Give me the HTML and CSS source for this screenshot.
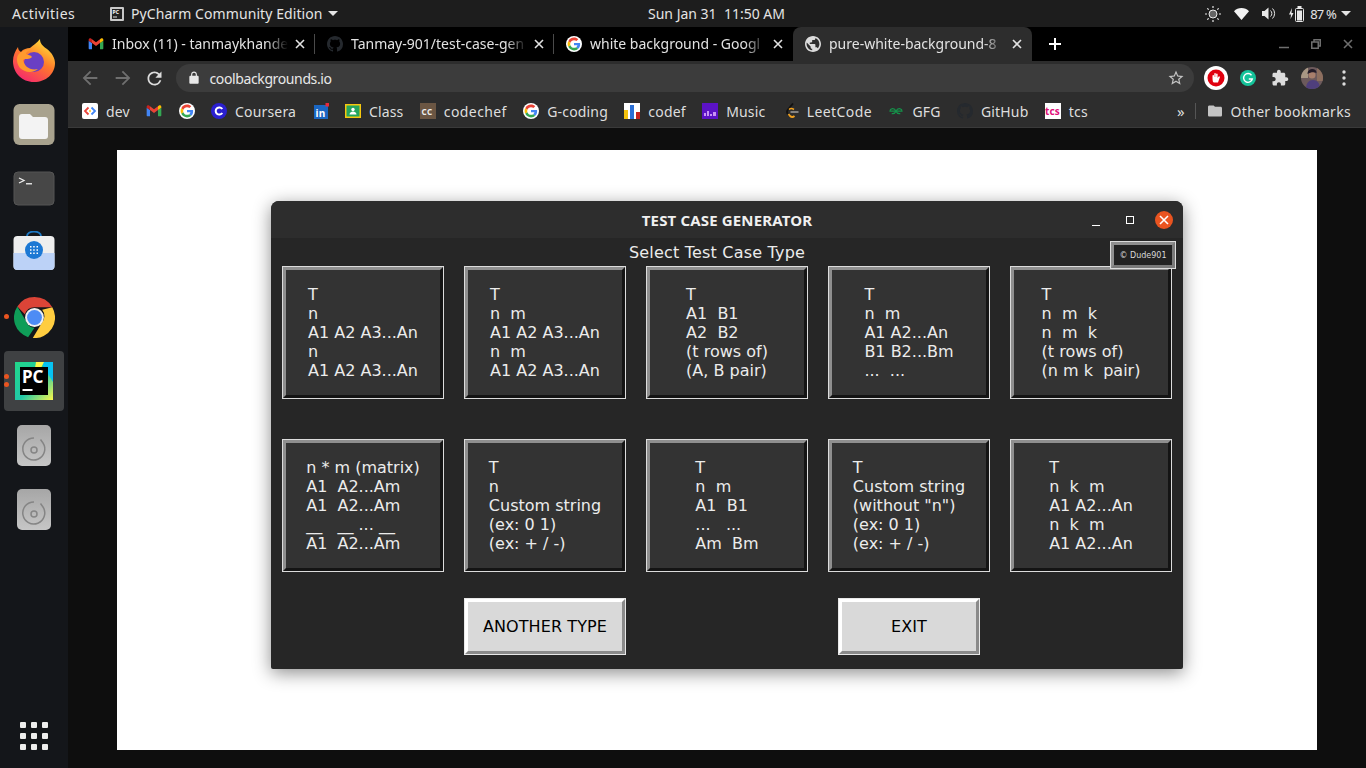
FILE: index.html
```html
<!DOCTYPE html>
<html>

<head>
    <title>Test Case Generator</title>
    <link rel="stylesheet" href="styles.css">
</head>

<body>
    <svg class="defs" width="0" height="0">
        <defs>
            <linearGradient id="discg" x1="0" y1="0" x2="0" y2="1">
                <stop offset="0" stop-color="#a6a6a6" />
                <stop offset="1" stop-color="#c6c6c6" />
            </linearGradient>
        </defs>
        <symbol id="i-google" viewBox="-6 -6 60 60">
            <circle cx="24" cy="24" r="30" fill="#fff" />
            <path fill="#EA4335" d="M24 9.5c3.54 0 6.71 1.22 9.21 3.6l6.85-6.85C35.9 2.38 30.47 0 24 0 14.62 0 6.51 5.38 2.56 13.22l7.98 6.19C12.43 13.72 17.74 9.5 24 9.5z" />
            <path fill="#4285F4" d="M46.98 24.55c0-1.57-.15-3.09-.38-4.55H24v9.02h12.94c-.58 2.96-2.26 5.48-4.78 7.18l7.73 6c4.51-4.18 7.09-10.36 7.09-17.65z" />
            <path fill="#FBBC05" d="M10.53 28.59c-.48-1.45-.76-2.99-.76-4.59s.27-3.14.76-4.59l-7.98-6.19C.92 16.46 0 20.12 0 24c0 3.88.92 7.54 2.56 10.78l7.97-6.19z" />
            <path fill="#34A853" d="M24 48c6.48 0 11.93-2.13 15.89-5.81l-7.73-6c-2.15 1.45-4.92 2.3-8.16 2.3-6.26 0-11.57-4.22-13.47-9.91l-7.98 6.19C6.51 42.62 14.62 48 24 48z" />
        </symbol>
        <symbol id="i-gmail" viewBox="0 0 24 24">
            <path fill="#4285f4" d="M2 20h4v-9.5L1 7v11.5A1.5 1.5 0 002 20z" />
            <path fill="#34a853" d="M18 20h4a1.5 1.5 0 001-1.5V7l-5 3.5z" />
            <path fill="#fbbc04" d="M18 5v5.5L23 7V5.5C23 3.6 20.8 2.6 19.4 3.7z" />
            <path fill="#ea4335" d="M6 10.5V5l6 4.5L18 5v5.5l-6 4.5z" />
            <path fill="#c5221f" d="M1 5.5V7l5 3.5V5L4.6 3.7C3.2 2.6 1 3.6 1 5.5z" />
        </symbol>
        <symbol id="i-github" viewBox="0 0 16 16">
            <path d="M8 0C3.58 0 0 3.58 0 8c0 3.54 2.29 6.53 5.47 7.59.4.07.55-.17.55-.38 0-.19-.01-.82-.01-1.49-2.01.37-2.53-.49-2.69-.94-.09-.23-.48-.94-.82-1.13-.28-.15-.68-.52-.01-.53.63-.01 1.08.58 1.23.82.72 1.21 1.87.87 2.33.66.07-.52.28-.87.51-1.07-1.78-.2-3.64-.89-3.64-3.95 0-.87.31-1.59.82-2.15-.08-.2-.36-1.02.08-2.12 0 0 .67-.21 2.2.82.64-.18 1.32-.27 2-.27.68 0 1.36.09 2 .27 1.53-1.04 2.2-.82 2.2-.82.44 1.1.16 1.92.08 2.12.51.56.82 1.27.82 2.15 0 3.07-1.87 3.75-3.65 3.95.29.25.54.73.54 1.48 0 1.07-.01 1.93-.01 2.2 0 .21.15.46.55.38A8.013 8.013 0 0016 8c0-4.42-3.58-8-8-8z" />
        </symbol>
        <symbol id="i-close" viewBox="0 0 10 10">
            <path d="M1 1l8 8M9 1l-8 8" stroke="currentColor" stroke-width="1.6" fill="none" />
        </symbol>
        <symbol id="i-disc" viewBox="0 0 40 41">
            <rect x="3" y="0" width="34" height="41" rx="5" fill="url(#discg)" />
            <path d="M20 13a11 11 0 1 0 9 5l-2.5-3.5" fill="none" stroke="#858585" stroke-width="1.5" />
            <circle cx="20" cy="25" r="3" fill="none" stroke="#858585" stroke-width="1.5" />
        </symbol>
    </svg>

    <header class="topbar">
        <span class="activities">Activities</span>
        <span class="app-menu">
            <svg width="14" height="14" viewBox="0 0 14 14">
                <rect width="14" height="14" rx="1" fill="#c9c9c9" />
                <rect x="2" y="2" width="10" height="10" fill="#222" />
                <rect x="3" y="9.5" width="4" height="1" fill="#ddd" />
                <text x="2.6" y="7" class="pc-mini">PC</text>
            </svg>
            <span class="app-name">PyCharm Community Edition</span>
            <i class="caret"></i>
        </span>
        <span class="clock">Sun Jan 31&nbsp;&nbsp;11:50 AM</span>
        <span class="tray">
            <svg class="tray-ico" width="16" height="16" viewBox="0 0 16 16" fill="none" stroke="#e8e8e8">
                <circle cx="8" cy="8" r="4" fill="#e8e8e8" fill-opacity=".35" />
                <path d="M8 0v2M8 14v2M0 8h2M14 8h2M2.3 2.3l1.4 1.4M12.3 12.3l1.4 1.4M2.3 13.7l1.4-1.4M12.3 3.7l1.4-1.4" stroke-width="1.2" />
            </svg>
            <svg class="tray-ico" width="15" height="12" viewBox="0 0 15 12">
                <path d="M0 3.2C2 1.2 4.6 0 7.5 0S13 1.2 15 3.2L7.5 12z" fill="#f2f2f2" />
            </svg>
            <svg class="tray-ico" width="14" height="13" viewBox="0 0 14 13">
                <path d="M0 4h2.5L6.5.5v12L2.5 9H0z" fill="#e8e8e8" />
                <path d="M8.5 3.5a4 4 0 0 1 0 6M10.5 1.5a7 7 0 0 1 0 10" fill="none" stroke="#e8e8e8" />
            </svg>
            <svg class="tray-bat" width="15" height="16" viewBox="0 0 15 16">
                <path d="M3 2L0 8.5h2L1.5 13 4.5 7h-2z" fill="#e8e8e8" />
                <rect x="6.5" y="2.5" width="8" height="13" rx="1" fill="none" stroke="#e8e8e8" />
                <rect x="8.5" y="0" width="4" height="2" fill="#e8e8e8" />
                <rect x="8" y="4.5" width="5" height="10" fill="#e8e8e8" />
            </svg>
            <span class="tray-pct">87 %</span>
            <i class="caret"></i>
        </span>
    </header>

    <div class="desk">
        <nav class="dock">
            <span class="dock-item">
                <svg width="44" height="44" viewBox="0 0 44 44">
                    <defs>
                        <linearGradient id="ffa" x1="0.8" y1="0.05" x2="0.25" y2="1">
                            <stop offset="0" stop-color="#ffe03a" />
                            <stop offset=".45" stop-color="#ff7a2a" />
                            <stop offset="1" stop-color="#f5276f" />
                        </linearGradient>
                    </defs>
                    <path d="M28 0c0 5 3 7 7 10 5 4 8 9 8 14 0 11-9 19-21 19S1 34 1 22c0-5 2-10 5-14 0 2 1 4 3 5 2-3 6-4 9-4 3-3 7-5 10-9z" fill="url(#ffa)" />
                    <circle cx="22" cy="23" r="10" fill="#6a3fc4" />
                    <path d="M6 16c3-4 8-6 12-5-3 1-4 3-4 4 2 1 5 1 6 3-3 3-6 1-9 3 1 6 7 11 15 9-6 5-14 3-18-1C5 25 4 20 6 16z" fill="#ff9a2e" />
                </svg>
            </span>
            <span class="dock-item">
                <svg width="42" height="42" viewBox="0 0 42 42">
                    <rect width="41" height="41" x="0.5" rx="6" fill="#a8a28e" />
                    <path d="M6 13a3 3 0 0 1 3-3h8l3 3h12a3 3 0 0 1 3 3v16a3 3 0 0 1-3 3H9a3 3 0 0 1-3-3z" fill="#f3f3f3" />
                </svg>
            </span>
            <span class="dock-item">
                <svg width="42" height="36" viewBox="0 0 42 36">
                    <rect x="1" y="1" width="40" height="33" rx="4" fill="#474747" stroke="#555" />
                    <path d="M6 7l5 2.5-5 2.5" fill="none" stroke="#eee" stroke-width="1.3" />
                    <rect x="13" y="12" width="6" height="1.5" fill="#ddd" />
                </svg>
            </span>
            <span class="dock-item">
                <svg width="42" height="44" viewBox="0 -5 42 44">
                    <path d="M14 2V0a7 4.5 0 0 1 14 0v2" fill="none" stroke="#1c78c4" stroke-width="1.8" />
                    <rect x="0.5" y="0" width="41" height="34" rx="4" fill="#eeeeee" />
                    <path d="M.5 17h41v13a4 4 0 0 1-4 4h-33a4 4 0 0 1-4-4z" fill="#bcd2f7" />
                    <circle cx="21" cy="14" r="9" fill="#1c78d4" />
                    <path d="M17 10h1.5v1.5H17zM20.2 10h1.5v1.500h-1.500zM23.5 10H25v1.5h-1.5zM17 13.3h1.5v1.5H17zM20.2 13.3h1.5v1.5h-1.5zM23.5 13.3H25v1.5h-1.5zM17 16.5h1.5V18H17zM20.2 16.5h1.5V18h-1.5zM23.5 16.5H25V18h-1.5z" fill="#fff" />
                </svg>
            </span>
            <span class="dock-item">
                <svg width="41" height="41" viewBox="0 0 48 48">
                    <path d="M24 0a24 24 0 0 1 20.8 12H24a12 12 0 0 0-11.4 8.3L3.9 11A24 24 0 0 1 24 0z" fill="#db4437" />
                    <path d="M3.9 11L14 28a12 12 0 0 0 10 8l-7.5 11A24 24 0 0 1 3.9 11z" fill="#0f9d58" />
                    <path d="M44.8 12A24 24 0 0 1 22 48l10.5-17.5A12 12 0 0 0 33 15z" fill="#ffcd40" />
                    <circle cx="24" cy="24" r="11" fill="#f1f1f1" />
                    <circle cx="24" cy="24" r="8.7" fill="#4d8cf5" />
                </svg>
            </span>
            <span class="dock-item dock-item-on">
                <svg width="40" height="40" viewBox="0 0 40 40">
                    <defs>
                        <linearGradient id="pcg" x1="0" y1="0" x2="1" y2="1">
                            <stop offset="0" stop-color="#21d789" />
                            <stop offset=".55" stop-color="#21c8a8" />
                            <stop offset="1" stop-color="#fcf84a" />
                        </linearGradient>
                    </defs>
                    <rect x="1" y="1" width="38" height="38" fill="url(#pcg)" />
                    <path d="M27 1h12v20L31 8z" fill="#07c3f2" />
                    <path d="M22 1h8l-3 6h-6z" fill="#fcf84a" />
                    <rect x="6" y="6" width="28" height="28" fill="#000" />
                    <text x="8" y="22" class="pc-big">PC</text>
                    <rect x="8.5" y="28" width="10" height="2" fill="#fff" />
                </svg>
            </span>
            <span class="dock-item"><svg width="40" height="41"><use href="#i-disc" /></svg></span>
            <span class="dock-item"><svg width="40" height="41"><use href="#i-disc" /></svg></span>
            <span class="dock-grid">
                <i></i><i></i><i></i><i></i><i></i><i></i><i></i><i></i><i></i>
            </span>
            <i class="run-dot run-chrome"></i>
            <i class="run-dot run-pc1"></i>
            <i class="run-dot run-pc2"></i>
        </nav>

        <div class="browser">
            <div class="tabstrip">
                <div class="tab">
                    <svg class="fav" width="16" height="16"><use href="#i-gmail" /></svg>
                    <span class="tab-title">Inbox (11) - tanmaykhande</span>
                    <svg class="tab-x" width="10" height="10"><use href="#i-close" /></svg>
                </div>
                <div class="tab">
                    <svg class="fav fav-gh" width="16" height="16"><use href="#i-github" /></svg>
                    <span class="tab-title">Tanmay-901/test-case-gen</span>
                    <svg class="tab-x" width="10" height="10"><use href="#i-close" /></svg>
                </div>
                <div class="tab tab-last">
                    <svg class="fav" width="16" height="16"><use href="#i-google" /></svg>
                    <span class="tab-title">white background - Googl</span>
                    <svg class="tab-x" width="10" height="10"><use href="#i-close" /></svg>
                </div>
                <div class="tab tab-on">
                    <svg class="fav" width="16" height="16" viewBox="2 2 20 20">
                        <path fill="#dcdcdc" d="M12 2C6.48 2 2 6.48 2 12s4.48 10 10 10 10-4.48 10-10S17.52 2 12 2zm-1 17.93c-3.95-.49-7-3.85-7-7.93 0-.62.08-1.21.21-1.79L9 15v1c0 1.1.9 2 2 2v1.93zm6.9-2.54c-.26-.81-1-1.39-1.9-1.39h-1v-3c0-.55-.45-1-1-1H8v-2h2c.55 0 1-.45 1-1V7h2c1.1 0 2-.9 2-2v-.41c2.93 1.19 5 4.06 5 7.41 0 2.08-.8 3.97-2.1 5.39z" />
                    </svg>
                    <span class="tab-title">pure-white-background-8</span>
                    <svg class="tab-x" width="10" height="10"><use href="#i-close" /></svg>
                </div>
                <svg class="newtab" width="12" height="12" viewBox="0 0 12 12">
                    <path d="M6 0v12M0 6h12" stroke="#fff" stroke-width="2" />
                </svg>
                <div class="winctl">
                    <svg width="10" height="10" viewBox="0 0 10 10"><path d="M0 8.5h10" stroke="#6e6e6e" stroke-width="1.5" /></svg>
                    <svg width="10" height="10" viewBox="0 0 10 10" fill="none" stroke="#6e6e6e" stroke-width="1.5"><path d="M.75 3h6.5v6.25H.75zM3 2.5V.75h6.25V7H7.5" /></svg>
                    <svg width="10" height="10" viewBox="0 0 10 10" color="#6e6e6e"><use href="#i-close" /></svg>
                </div>
            </div>

            <div class="toolbar">
                <svg class="nav-ico" width="22" height="22" viewBox="0 0 24 24" fill="#6f6f6f"><path d="M20 11H7.83l5.59-5.59L12 4l-8 8 8 8 1.41-1.41L7.83 13H20v-2z" /></svg>
                <svg class="nav-ico" width="22" height="22" viewBox="0 0 24 24" fill="#6f6f6f"><path d="M4 13h12.17l-5.59 5.59L12 20l8-8-8-8-1.41 1.41L16.17 11H4v2z" /></svg>
                <svg class="nav-ico" width="21" height="21" viewBox="0 0 24 24" fill="#dcdcdc"><path d="M17.65 6.35A7.958 7.958 0 0012 4c-4.42 0-7.99 3.58-7.99 8s3.57 8 7.99 8c3.73 0 6.84-2.55 7.73-6h-2.08A5.99 5.99 0 0112 18c-3.31 0-6-2.69-6-6s2.69-6 6-6c1.66 0 3.14.69 4.22 1.78L13 11h7V4l-2.35 2.35z" /></svg>
                <div class="omnibox">
                    <svg width="14" height="14" viewBox="0 0 24 24" fill="#e8e8e8"><path d="M18 8h-1V6c0-2.76-2.24-5-5-5S7 3.24 7 6v2H6c-1.1 0-2 .9-2 2v10c0 1.1.9 2 2 2h12c1.1 0 2-.9 2-2V10c0-1.1-.9-2-2-2zM9 8V6c0-1.66 1.34-3 3-3s3 1.34 3 3v2H9z" /></svg>
                    <span class="url">coolbackgrounds.io</span>
                    <svg class="star" width="18" height="18" viewBox="0 0 24 24" fill="#c4c4c4"><path d="M22 9.24l-7.19-.62L12 2 9.19 8.63 2 9.24l5.46 4.73L5.82 21 12 17.27 18.18 21l-1.63-7.03L22 9.24zM12 15.4l-3.76 2.27 1-4.28-3.32-2.88 4.38-.38L12 6.1l1.71 4.04 4.38.38-3.32 2.88 1 4.28L12 15.4z" /></svg>
                </div>
                <div class="ext">
                    <svg width="24" height="24" viewBox="0 0 24 24">
                        <circle cx="12" cy="12" r="12" fill="#fff" />
                        <circle cx="12" cy="12" r="8.5" fill="#e0000f" />
                        <path d="M8.5 12V9.5a.8.8 0 0 1 1.5 0V11h.3V7.5a.8.8 0 0 1 1.5 0V11h.3V8a.8.8 0 0 1 1.5 0v4l1-1.5a.8.8 0 0 1 1.3.8L14 16.5h-4c-1 0-1.5-1.5-1.5-4.5z" fill="#fff" />
                    </svg>
                    <svg width="16" height="16" viewBox="0 0 16 16">
                        <circle cx="8" cy="8" r="8" fill="#15c39a" />
                        <path d="M11.5 5.2A4.4 4.4 0 1 0 12.3 9H8.8" fill="none" stroke="#fff" stroke-width="1.4" />
                    </svg>
                    <svg class="ext-puzzle" width="18" height="18" viewBox="0 0 24 24" fill="#dcdcdc"><path d="M20.5 11H19V7c0-1.1-.9-2-2-2h-4V3.5C13 2.12 11.88 1 10.5 1S8 2.12 8 3.5V5H4c-1.1 0-1.99.9-1.99 2v3.8H3.5c1.49 0 2.7 1.21 2.7 2.7s-1.21 2.7-2.7 2.7H2V20c0 1.1.9 2 2 2h3.8v-1.5c0-1.49 1.21-2.7 2.7-2.7 1.49 0 2.7 1.21 2.7 2.7V22H17c1.1 0 2-.9 2-2v-4h1.5c1.38 0 2.5-1.12 2.5-2.5S21.88 11 20.5 11z" /></svg>
                    <svg width="22" height="22" viewBox="0 0 22 22">
                        <defs><clipPath id="av"><circle cx="11" cy="11" r="11" /></clipPath></defs>
                        <g clip-path="url(#av)">
                            <rect width="22" height="22" fill="#6c5a5c" />
                            <rect width="7" height="11" fill="#a89784" />
                            <rect x="16" width="6" height="14" fill="#8d6f5f" />
                            <path d="M5 22c0-6 3-9 7-9s7 3 7 9z" fill="#4f3f7c" />
                            <circle cx="11" cy="8" r="3.5" fill="#a87f6c" />
                            <path d="M6.5 7c0-4 3-5 5-5s4 1 4 4c-2-1-6-1-9 1z" fill="#241c28" />
                        </g>
                    </svg>
                    <svg class="ext-dots" width="4" height="16" viewBox="0 0 4 16" fill="#dcdcdc"><circle cx="2" cy="2" r="1.7" /><circle cx="2" cy="8" r="1.7" /><circle cx="2" cy="14" r="1.7" /></svg>
                </div>
            </div>

            <div class="bookmarks">
                <span class="bm">
                    <svg width="16" height="16" viewBox="0 0 16 16">
                        <rect width="16" height="16" rx="2" fill="#fff" />
                        <path d="M6.5 4.5L3 8l3.5 3.5" fill="none" stroke="#e8453c" stroke-width="1.8" />
                        <path d="M9.5 4.5L13 8l-3.5 3.5" fill="none" stroke="#4285f4" stroke-width="1.8" />
                        <path d="M7 8l1-1.5L9 8l-1 1.5z" fill="#fbbc04" />
                    </svg>dev
                </span>
                <span class="bm"><svg width="16" height="16"><use href="#i-gmail" /></svg></span>
                <span class="bm"><svg width="16" height="16"><use href="#i-google" /></svg></span>
                <span class="bm">
                    <svg width="16" height="16" viewBox="0 0 16 16">
                        <circle cx="8" cy="8" r="8" fill="#2a1fd0" />
                        <path d="M11.3 6a3.6 3.6 0 1 0 0 4" fill="none" stroke="#fff" stroke-width="2" />
                    </svg>Coursera
                </span>
                <span class="bm">
                    <svg width="16" height="16" viewBox="0 0 16 16">
                        <rect x="1" y="2" width="14" height="14" fill="#1a66c2" />
                        <rect x="12.5" y="0" width="3.5" height="3.5" fill="#e8283a" />
                        <text x="2.5" y="13.5" class="li-mini">in</text>
                    </svg>
                </span>
                <span class="bm">
                    <svg width="16" height="16" viewBox="0 0 16 16">
                        <rect y="1" width="16" height="14" fill="#f7c80f" />
                        <rect x="1.5" y="2.5" width="13" height="11" fill="#25a55f" />
                        <circle cx="8" cy="6.5" r="1.7" fill="#fff" />
                        <path d="M4.5 11.5c0-2 2-3 3.5-3s3.5 1 3.5 3z" fill="#fff" />
                    </svg>Class
                </span>
                <span class="bm bm-wide">
                    <svg width="16" height="16" viewBox="0 0 16 16">
                        <rect width="16" height="16" fill="#6b5643" />
                        <text x="1.5" y="11.5" class="cc-mini">CC</text>
                    </svg>codechef
                </span>
                <span class="bm"><svg width="16" height="16"><use href="#i-google" /></svg>G-coding</span>
                <span class="bm">
                    <svg width="16" height="16" viewBox="0 0 16 16">
                        <rect width="16" height="16" fill="#fff" />
                        <rect x="0" y="7" width="4" height="9" fill="#f4c20d" />
                        <rect x="6" y="2" width="4" height="14" fill="#2b6fd6" />
                        <rect x="12" y="9" width="4" height="7" fill="#c5221f" />
                    </svg>codef
                </span>
                <span class="bm">
                    <svg width="16" height="16" viewBox="0 0 16 16">
                        <rect width="16" height="16" fill="#5b12c4" />
                        <path d="M2 10h2v3H2zM5 8h2v5H5zM8 11h2v2H8zM11 9h3v4h-3z" fill="#c893f5" />
                    </svg>Music
                </span>
                <span class="bm bm-leet bm-wide">
                    <svg width="14" height="16" viewBox="0 0 14 16" fill="none">
                        <path d="M8 .5L3 6.5c-1.5 2-1.5 3 0 4.5" stroke="#111" stroke-width="1.8" />
                        <path d="M3.5 11l1.5 2c1.5 1.3 3 1.3 4.5 0" stroke="#f0a01e" stroke-width="1.8" />
                        <path d="M4 6.5c1.5-1.3 3-1.3 5 0" stroke="#f0a01e" stroke-width="1.5" />
                        <path d="M5.5 9h8" stroke="#b4b4b4" stroke-width="1.3" />
                    </svg>LeetCode
                </span>
                <span class="bm">
                    <svg width="16" height="16" viewBox="0 0 16 16" fill="none" stroke="#15924a" stroke-width="1.2">
                        <path d="M8 8.2C7 6 5 5.5 3.7 5.8 2.5 6 2 7 2 8.2h12C14 7 13.5 6 12.3 5.8 11 5.5 9 6 8 8.2c-1 2.2-3 2.7-4.3 2.4M8 8.2c1 2.2 3 2.7 4.3 2.4" />
                    </svg>GFG
                </span>
                <span class="bm"><svg class="fav-gh" width="16" height="16"><use href="#i-github" /></svg>GitHub</span>
                <span class="bm">
                    <svg width="16" height="16" viewBox="0 0 16 16">
                        <rect width="16" height="16" fill="#fff" />
                        <text x="0" y="11.5" class="tcs-mini">tcs</text>
                    </svg>tcs
                </span>
                <span class="bm-more">»</span>
                <i class="bm-sep"></i>
                <span class="bm bm-other">
                    <svg width="14" height="14" viewBox="2 2 20 20" fill="#c4c4c4"><path d="M10 4H4c-1.1 0-2 .9-2 2v12c0 1.1.9 2 2 2h16c1.1 0 2-.9 2-2V8c0-1.1-.9-2-2-2h-8l-2-2z" /></svg>Other bookmarks
                </span>
            </div>

            <div class="viewport">
                <div class="sheet">
                    <section class="tkwin">
                        <div class="tk-title">
                            <span class="tk-name">TEST CASE GENERATOR</span>
                            <span class="tk-min"></span>
                            <span class="tk-max"></span>
                            <span class="tk-close"><svg width="10" height="10"><use href="#i-close" /></svg></span>
                        </div>
                        <div class="tk-body">
                            <h1 class="tk-head">Select Test Case Type</h1>
                            <div class="badge"><span>© Dude901</span></div>
                            <div class="cards">
                                <div class="card"><pre>T
n
A1 A2 A3...An
n
A1 A2 A3...An</pre></div>
                                <div class="card"><pre>T
n  m
A1 A2 A3...An
n  m
A1 A2 A3...An</pre></div>
                                <div class="card"><pre>T
A1  B1
A2  B2
(t rows of)
(A, B pair)</pre></div>
                                <div class="card"><pre>T
n  m
A1 A2...An
B1 B2...Bm
...  ...</pre></div>
                                <div class="card"><pre>T
n  m  k
n  m  k
(t rows of)
(n m k  pair)</pre></div>
                                <div class="card"><pre>n * m (matrix)
A1  A2...Am
A1  A2...Am
__   __ ... __
A1  A2...Am</pre></div>
                                <div class="card"><pre>T
n
Custom string
(ex: 0 1)
(ex: + / -)</pre></div>
                                <div class="card"><pre>T
n  m
A1  B1
...   ...
Am  Bm</pre></div>
                                <div class="card"><pre>T
Custom string
(without "n")
(ex: 0 1)
(ex: + / -)</pre></div>
                                <div class="card"><pre>T
n  k  m
A1 A2...An
n  k  m
A1 A2...An</pre></div>
                            </div>
                            <div class="actions">
                                <div class="btn btn-another"><span>ANOTHER TYPE</span></div>
                                <div class="btn btn-exit"><span>EXIT</span></div>
                            </div>
                        </div>
                    </section>
                </div>
            </div>
        </div>
    </div>
</body>

</html>
```

FILE: styles.css
```css
* {
    box-sizing: border-box;
}

html,
body {
    margin: 0;
    width: 1366px;
    height: 768px;
    overflow: hidden;
}

body {
    display: flex;
    flex-direction: column;
    font-family: "Noto Sans", sans-serif;
    background: #0e0e0e;
}

.defs {
    position: absolute;
}

svg {
    display: block;
    flex: none;
}

/* gnome top bar */
.topbar {
    height: 27px;
    flex: none;
    display: flex;
    align-items: center;
    background: #1d1d1d;
    color: #e4e4e4;
    font-size: 14px;
    position: relative;
}

.activities {
    margin-left: 12px;
    width: 98px;
    letter-spacing: .5px;
}

.app-menu {
    display: flex;
    align-items: center;
    gap: 7px;
}

.app-name {
    letter-spacing: .08px;
}

.app-menu .caret {
    margin-left: -2px;
}

.caret {
    display: block;
    width: 0;
    height: 0;
    border: 5px solid transparent;
    border-top: 5px solid #e4e4e4;
    border-bottom: 0;
}

.clock {
    position: absolute;
    left: 648px;
    top: 4px;
    white-space: nowrap;
}

.tray {
    margin-left: auto;
    margin-right: 15px;
    display: flex;
    align-items: center;
}

.tray-ico {
    margin-right: 13px;
}

.tray-bat {
    margin-right: 6px;
}

.tray-pct {
    font-size: 13px;
    margin-right: 5px;
    letter-spacing: -.8px;
}

.pc-mini {
    font: bold 5px "Noto Sans", sans-serif;
    fill: #fff;
}

.desk {
    flex: 1;
    display: flex;
    min-height: 0;
}

/* dock */
.dock {
    width: 68px;
    flex: none;
    position: relative;
    display: flex;
    flex-direction: column;
    align-items: center;
    background: #14161a;
}

.dock-item {
    width: 60px;
    height: 60px;
    margin-top: 4px;
    flex: none;
    display: flex;
    align-items: center;
    justify-content: center;
    border-radius: 4px;
}

.dock-item-on {
    background: #3f4143;
}

.pc-big {
    font: bold 17px "Noto Sans", sans-serif;
    fill: #fff;
}

.dock-grid {
    margin-top: auto;
    margin-bottom: 18px;
    display: grid;
    grid-template-columns: repeat(3, 6px);
    gap: 5px;
}

.dock-grid i {
    width: 6px;
    height: 6px;
    background: #eeeeee;
    border-radius: 1px;
}

.run-dot {
    position: absolute;
    left: 4px;
    width: 5px;
    height: 5px;
    border-radius: 50%;
    background: #e95420;
}

.run-chrome {
    top: 287px;
}

.run-pc1 {
    top: 347px;
}

.run-pc2 {
    top: 355px;
}

/* chrome */
.browser {
    flex: 1;
    min-width: 0;
    display: flex;
    flex-direction: column;
}

.tabstrip {
    height: 34px;
    flex: none;
    display: flex;
    align-items: center;
    padding-left: 8px;
    background: #000;
}

.tab {
    width: 239px;
    height: 34px;
    flex: none;
    display: flex;
    align-items: center;
    padding-left: 12px;
    color: #e2e2e2;
    font-size: 14px;
    position: relative;
}

.tab::after {
    content: "";
    position: absolute;
    right: 0;
    top: 7px;
    bottom: 7px;
    width: 1px;
    background: #4a4a4a;
}

.tab-last::after {
    display: none;
}

.tab-on {
    background: #2d2d2d;
    border-radius: 8px 8px 0 0;
}

.tab-on::after {
    display: none;
}

.tab-title {
    width: 176px;
    margin-left: 8px;
    padding-bottom: 2px;
    white-space: nowrap;
    -webkit-mask-image: linear-gradient(to right, #000 88%, transparent 100%);
    mask-image: linear-gradient(to right, #000 88%, transparent 100%);
}

.tab-x {
    margin-left: 7px;
    color: #e2e2e2;
}

.fav-gh {
    fill: #25292e;
}

.newtab {
    margin-left: 17px;
}

.winctl {
    margin-left: auto;
    margin-right: 13px;
    display: flex;
    gap: 22px;
}

.toolbar {
    height: 34px;
    flex: none;
    display: flex;
    align-items: center;
    padding-left: 11px;
    background: #2d2d2d;
}

.nav-ico {
    margin-right: 10.5px;
}

.omnibox {
    width: 1018px;
    height: 28px;
    display: flex;
    align-items: center;
    padding: 0 9px 0 11px;
    border-radius: 14px;
    background: #3c3c3c;
    color: #e8e8e8;
    font-size: 14px;
}

.url {
    margin-left: 9px;
    letter-spacing: -.38px;
}

.star {
    margin-left: auto;
}

.ext {
    display: flex;
    align-items: center;
    margin-left: 10px;
    gap: 12px;
}

.ext-puzzle {
    margin-left: 3px;
}

.ext-dots {
    margin-left: 7px;
}

.bookmarks {
    height: 33px;
    flex: none;
    display: flex;
    align-items: center;
    padding-left: 14px;
    gap: 16.4px;
    background: #2d2d2d;
    border-bottom: 1px solid #3a3a3a;
    color: #dedede;
    font-size: 14px;
    letter-spacing: .17px;
}

.bm {
    display: flex;
    align-items: center;
    gap: 8px;
    white-space: nowrap;
}

.bm-wide {
    letter-spacing: .4px;
}

.bm-leet {
    margin-left: 3px;
}

.bm-more {
    margin-left: auto;
    font-size: 15px;
}

.bm-sep {
    width: 1px;
    height: 16px;
    margin-left: -6px;
    background: #555;
}

.bm-other {
    gap: 9px;
    margin-left: -5px;
    margin-right: 15px;
    letter-spacing: .3px;
}

.li-mini {
    font: bold 10px "Noto Sans", sans-serif;
    fill: #fff;
}

.cc-mini {
    font: bold 8px "Noto Sans", sans-serif;
    fill: #eee;
}

.tcs-mini {
    font: bold 10px "Noto Sans", sans-serif;
    fill: #e0107a;
}

/* the picture shown in the tab */
.viewport {
    flex: 1;
    min-height: 0;
    padding: 22px 0 0 49px;
    background: #0e0e0e;
}

.sheet {
    width: 1200px;
    height: 600px;
    padding: 51px 0 0 154px;
    background: #fff;
}

/* tkinter window */
.tkwin {
    width: 912px;
    height: 468px;
    border-radius: 8px 8px 2px 2px;
    background: #262626;
    box-shadow: 0 4px 18px rgba(0, 0, 0, .45);
    font-family: "DejaVu Sans", sans-serif;
}

.tk-title {
    height: 37px;
    padding-top: 1px;
    display: flex;
    align-items: center;
    position: relative;
    border-radius: 8px 8px 0 0;
    background: #2d2d2d;
}

.tk-name {
    flex: 1;
    text-align: center;
    color: #f0f0f0;
    font: bold 15px "Noto Sans", sans-serif;
    letter-spacing: .15px;
}

.tk-min {
    position: absolute;
    left: 821px;
    top: 24px;
    width: 8px;
    height: 1px;
    background: #fff;
}

.tk-max {
    position: absolute;
    left: 855px;
    top: 15px;
    width: 8px;
    height: 8px;
    border: 1px solid #fff;
}

.tk-close {
    position: absolute;
    left: 884px;
    top: 10px;
    width: 18px;
    height: 18px;
    display: flex;
    align-items: center;
    justify-content: center;
    border-radius: 50%;
    background: #e95420;
    color: #fff;
}

.tk-body {
    position: relative;
    padding-left: 11px;
}

.tk-head {
    height: 28px;
    margin: 0;
    padding-right: 31px;
    text-align: center;
    color: #ececec;
    font-size: 16px;
    font-weight: normal;
    line-height: 29px;
    letter-spacing: .2px;
}

.badge {
    position: absolute;
    left: 839px;
    top: 3px;
    z-index: 1;
    width: 66px;
    height: 28px;
    border: 1px solid #dcdcdc;
}

.badge span {
    display: flex;
    align-items: center;
    justify-content: center;
    height: 100%;
    border: 3px solid;
    border-color: #8f8f8f #7a7a7a #7a7a7a #8f8f8f;
    background: #222;
    color: #d8d8d8;
    font-size: 8px;
}

.cards {
    display: grid;
    grid-template-columns: repeat(5, 162px);
    grid-auto-rows: 133px;
    gap: 40px 20px;
}

.card {
    display: flex;
    align-items: center;
    justify-content: center;
    border: 4px solid;
    border-color: #8f8f8f #141414 #141414 #8f8f8f;
    background: #333;
    outline: 1px solid #dcdcdc;
    outline-offset: -1px;
}

.card pre {
    margin: 0;
    color: #ececec;
    font: 16px/19px "DejaVu Sans", sans-serif;
}

.actions {
    display: flex;
    margin-top: 26px;
    padding-left: 182px;
}

.btn {
    height: 57px;
    border: 4px solid;
    border-color: #fff #8a8a8a #8a8a8a #fff;
    outline: 1px solid #e8e8e8;
    outline-offset: -1px;
    background: #d9d9d9;
    color: #000;
    font-size: 16px;
    letter-spacing: .1px;
    display: flex;
    align-items: center;
    justify-content: center;
}

.btn-another {
    width: 162px;
}

.btn-exit {
    width: 142px;
    margin-left: 212px;
}
```
